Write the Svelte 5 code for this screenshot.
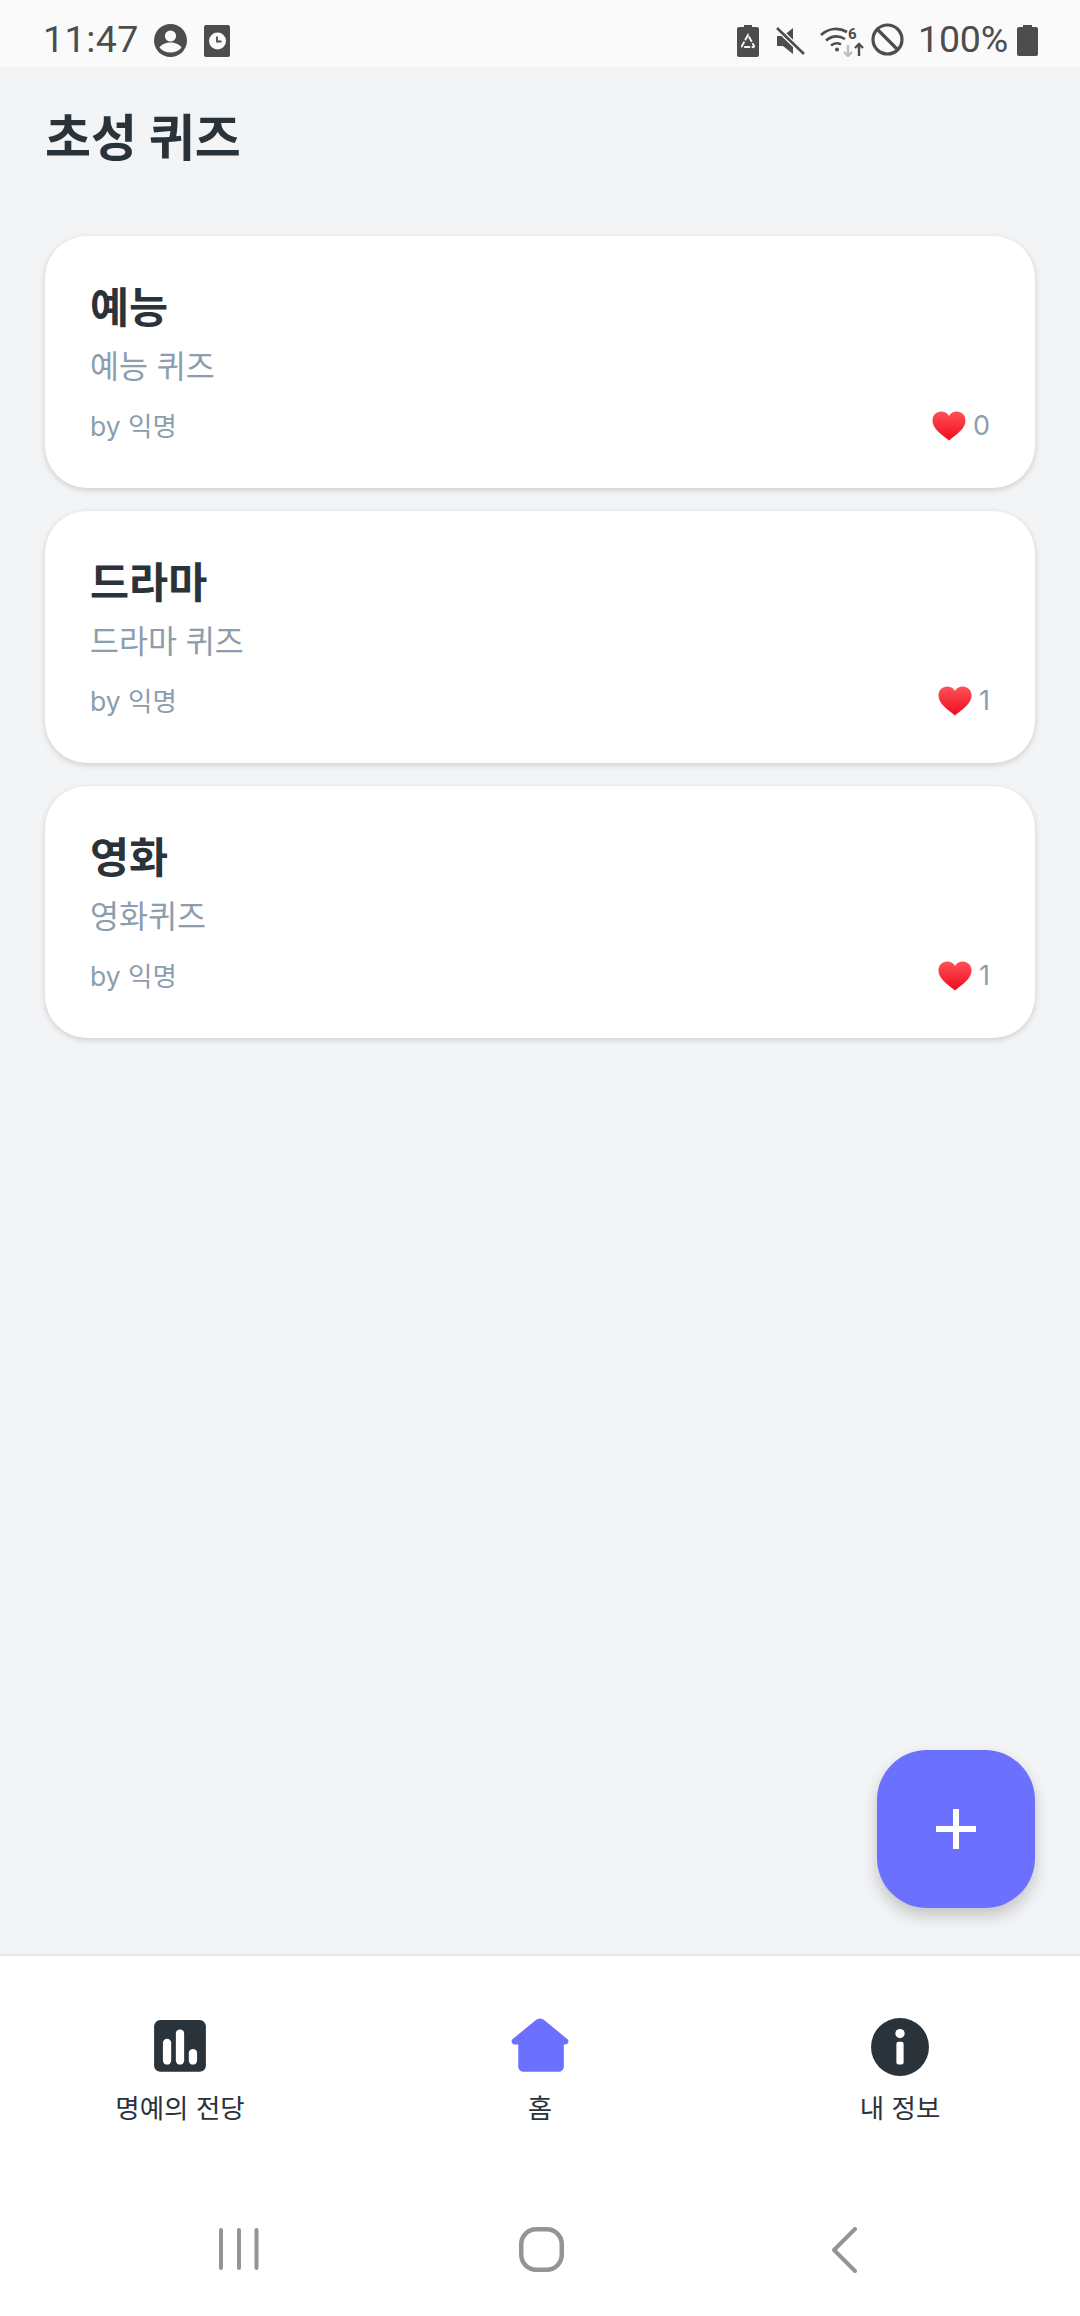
<script>
  const quizzes = [
    { title: '예능', desc: '예능 퀴즈', likes: 0 },
    { title: '드라마', desc: '드라마 퀴즈', likes: 1 },
    { title: '영화', desc: '영화퀴즈', likes: 1 }
  ];
</script>

<div class="page">
  <div class="status">
    <span class="time">11:47</span>
    <svg class="s-person" viewBox="0 0 33 33"><circle cx="16.5" cy="16.5" r="16.5" fill="#4d4d4d"/><circle cx="16.5" cy="12" r="5.6" fill="#fafafa"/><path d="M5.5 23.5c2.5-3.6 6.6-5 11-5s8.500 1.400 11 5c-2.600 3.200-6.500 5-11 5s-8.400-1.800-11-5z" fill="#fafafa"/></svg>
    <svg class="s-clock" viewBox="0 0 26 32"><rect width="26" height="32" rx="2" fill="#4d4d4d"/><circle cx="13.500" cy="16" r="8.500" fill="#fafafa"/><path d="M13 11.500v5h4.500" fill="none" stroke="#4d4d4d" stroke-width="1.800"/></svg>
    <span class="grow"></span>
    <svg class="s-bat" viewBox="0 0 22 32"><path d="M7 0h8v2h5a2 2 0 0 1 2 2v26a2 2 0 0 1-2 2H2a2 2 0 0 1-2-2V4a2 2 0 0 1 2-2h5z" fill="#4d4d4d"/><path d="M11 10l-5.500 10a1 1 0 0 0 1 2h9a1 1 0 0 0 1-2z" stroke="#fafafa" stroke-width="1.900" fill="none" stroke-dasharray="6 1.600"/></svg>
    <svg class="s-mute" viewBox="0 0 29 28"><path d="M1 9h6l10-8v26L7 19H1z" fill="#4d4d4d"/><path d="M1 1l27 26" stroke="#fafafa" stroke-width="5.500"/><path d="M1 1l27 26" stroke="#4d4d4d" stroke-width="2.600"/></svg>
    <svg class="s-wifi" viewBox="0 0 45 32">
      <path d="M1 10c8-7.500 18-7.500 26-3M6 15.500c6-5 13-5 19-1.500M11 20.500c3.500-2.800 7-2.800 10-1" fill="none" stroke="#4d4d4d" stroke-width="2.600"/>
      <circle cx="17" cy="24.500" r="2" fill="#4d4d4d"/>
      <text x="28" y="14" class="six">6</text>
      <path d="M28 20v11M24 27l4 4 4-4" fill="none" stroke="#bdbdbd" stroke-width="2.400"/>
      <path d="M39 31V19M35 23l4-4 4 4" fill="none" stroke="#4d4d4d" stroke-width="2.400"/>
    </svg>
    <svg class="s-block" viewBox="0 0 33 33"><circle cx="16.500" cy="16.500" r="14.500" fill="none" stroke="#4d4d4d" stroke-width="3.200"/><path d="M6.500 6.500l20 20" stroke="#4d4d4d" stroke-width="3.200"/></svg>
    <span class="pct">100%</span>
    <svg class="s-full" viewBox="0 0 21 31"><path d="M6 0h9v2h4a2 2 0 0 1 2 2v25a2 2 0 0 1-2 2H2a2 2 0 0 1-2-2V4a2 2 0 0 1 2-2h4z" fill="#4d4d4d"/></svg>
  </div>

  <main class="content">
    <h1>초성 퀴즈</h1>
    <div class="list">
      {#each quizzes as q}
        <article class="card">
          <h2>{q.title}</h2>
          <p class="desc">{q.desc}</p>
          <div class="meta">
            <span class="by">by 익명</span>
            <span class="likes">
              <svg class="heart" viewBox="0 0 34 30">
                <defs><linearGradient id="hg" x1="0" y1="0" x2="0" y2="1"><stop offset="0" stop-color="#ff5157"/><stop offset="1" stop-color="#ee0c1c"/></linearGradient></defs>
                <path d="M17 29.500C9 23 .5 17.500.5 9.500.5 4 4.300.5 9.300.5c3.400 0 6.200 1.700 7.700 4.500C18.500 2.200 21.300.5 24.700.5c5 0 8.800 3.500 8.800 9 0 8-8.500 13.500-16.500 20z" fill="url(#hg)"/>
              </svg>
              <span>{q.likes}</span>
            </span>
          </div>
        </article>
      {/each}
    </div>
    <button class="fab" aria-label="추가">
      <svg viewBox="0 0 40 40"><path d="M20 0v40M0 20h40" stroke="#fff" stroke-width="6"/></svg>
    </button>
  </main>

  <nav class="tabs">
    <div class="tab">
      <svg class="t-icon" viewBox="0 0 56 56"><rect x="3" y="2" width="50" height="50" rx="6" fill="#2a323a"/><rect x="11.500" y="20" width="8" height="25" rx="4" fill="#fff"/><rect x="24" y="11" width="8" height="34" rx="4" fill="#fff"/><rect x="36.500" y="30" width="8" height="15" rx="4" fill="#fff"/></svg>
      <span>명예의 전당</span>
    </div>
    <div class="tab">
      <svg class="t-icon" viewBox="0 0 56 56"><path d="M24 2a6 6 0 0 1 8 0l22 18a3 3 0 0 1-2 5.500h-1V47a5 5 0 0 1-5 5H12a5 5 0 0 1-5-5V25.500H4A3 3 0 0 1 2 20z" fill="#6c70ff"/></svg>
      <span>홈</span>
    </div>
    <div class="tab">
      <svg class="t-icon" viewBox="0 0 56 56"><circle cx="28" cy="28" r="28" fill="#2a323a"/><circle cx="28" cy="15" r="4.500" fill="#fff"/><rect x="24.500" y="23" width="7" height="22" rx="2" fill="#fff"/></svg>
      <span>내 정보</span>
    </div>
  </nav>

  <div class="sysnav">
    <svg class="n-recent" viewBox="0 0 40 42"><path d="M2 2v38M20 2v38M37.500 2v38" stroke="#949494" stroke-width="4" stroke-linecap="round"/></svg>
    <svg class="n-home" viewBox="0 0 45 45"><rect x="2.250" y="2.250" width="40.500" height="40.500" rx="15" fill="none" stroke="#949494" stroke-width="4.500"/></svg>
    <svg class="n-back" viewBox="0 0 25 46"><path d="M23 2L2 23l21 21" fill="none" stroke="#949494" stroke-width="4" stroke-linecap="round" stroke-linejoin="round"/></svg>
  </div>
</div>

<style>
  :global(body) { margin: 0; background: #f3f4f6; }
  * { box-sizing: border-box; }
  .page {
    width: 1080px; height: 2316px; display: flex; flex-direction: column;
    background: #f3f4f6; overflow: hidden;
    font-family: Inter, "Noto Sans CJK KR", sans-serif;
  }
  .status {
    height: 67px; flex: none; background: #fafafa; display: flex; align-items: center;
    padding: 0 42px 0 43px; color: #4d4d4d;
    font-family: Roboto, sans-serif; font-size: 37.500px;
  }
  .grow { flex: 1; }
  .time { width: 95px; margin-right: 16px; line-height: 1; letter-spacing: .5px; margin-top: 13px; }
  .s-person { width: 33px; height: 33px; margin-right: 17px; margin-top: 14px; }
  .s-clock { width: 26px; height: 32px; margin-top: 14px; }
  .s-bat { width: 22px; height: 32px; margin-top: 14px; margin-right: 17px; }
  .s-mute { width: 29px; height: 28px; margin-top: 14px; margin-right: 15px; }
  .s-wifi { width: 45px; height: 32px; margin-top: 14px; margin-right: 6px; }
  .s-block { width: 33px; height: 33px; margin-top: 12px; margin-right: 14px; }
  .s-full { width: 21px; height: 31px; margin-top: 14px; }
  .pct { width: 90px; margin-right: 9px; line-height: 1; margin-top: 13px; letter-spacing: -.2px; }
  .six { font: 700 15px Roboto, sans-serif; fill: #4d4d4d; }

  .content { flex: 1; position: relative; padding: 0 45px; }
  h1 {
    margin: 0; padding-top: 37px; height: 169px;
    font-size: 50px; line-height: 68px; font-weight: 700; color: #2a323a;
  }
  .list { display: flex; flex-direction: column; gap: 23px; }
  .card {
    height: 252px; background: #fff; border-radius: 42px; padding: 43px 45px 0;
    box-shadow: 0 2px 6px rgba(0,0,0,.16);
  }
  h2 { margin: 0; font-size: 42.500px; line-height: 58px; font-weight: 700; color: #2a323a; }
  .desc { margin: 3px 0 0; font-size: 31.500px; line-height: 54px; color: #8c9dad; font-weight: 400; }
  .meta { display: flex; justify-content: space-between; align-items: center; margin-top: 12px; font-size: 26.500px; line-height: 40px; color: #8c9dad; }
  .likes { display: flex; align-items: center; gap: 7px; font-size: 27px; }
  .heart { width: 34px; height: 30px; }

  .fab {
    position: absolute; right: 45px; bottom: 46px; width: 158px; height: 158px;
    border: 0; padding: 0; border-radius: 50px; background: #6c70ff;
    display: flex; align-items: center; justify-content: center;
    box-shadow: 0 8px 16px rgba(0,0,0,.2);
  }
  .fab svg { width: 40px; height: 40px; }

  .tabs {
    flex: none; height: 246px; background: #fff; border-top: 2px solid #e4e6e9;
    display: grid; grid-template-columns: repeat(3, 1fr); padding-top: 62px;
  }
  .tab { display: flex; flex-direction: column; align-items: center; gap: 13px; }
  .t-icon { width: 58px; height: 58px; }
  .tab span { font-size: 26.500px; line-height: 38px; color: #2a323a; }

  .sysnav {
    flex: none; height: 116px; background: #fff;
    display: flex; align-items: flex-start; padding: 27px 0 0 219px;
  }
  .n-recent { width: 40px; height: 42px; margin-top: 1px; }
  .n-home { width: 45px; height: 45px; margin-left: 260px; }
  .n-back { width: 25px; height: 46px; margin-left: 268px; }
</style>
